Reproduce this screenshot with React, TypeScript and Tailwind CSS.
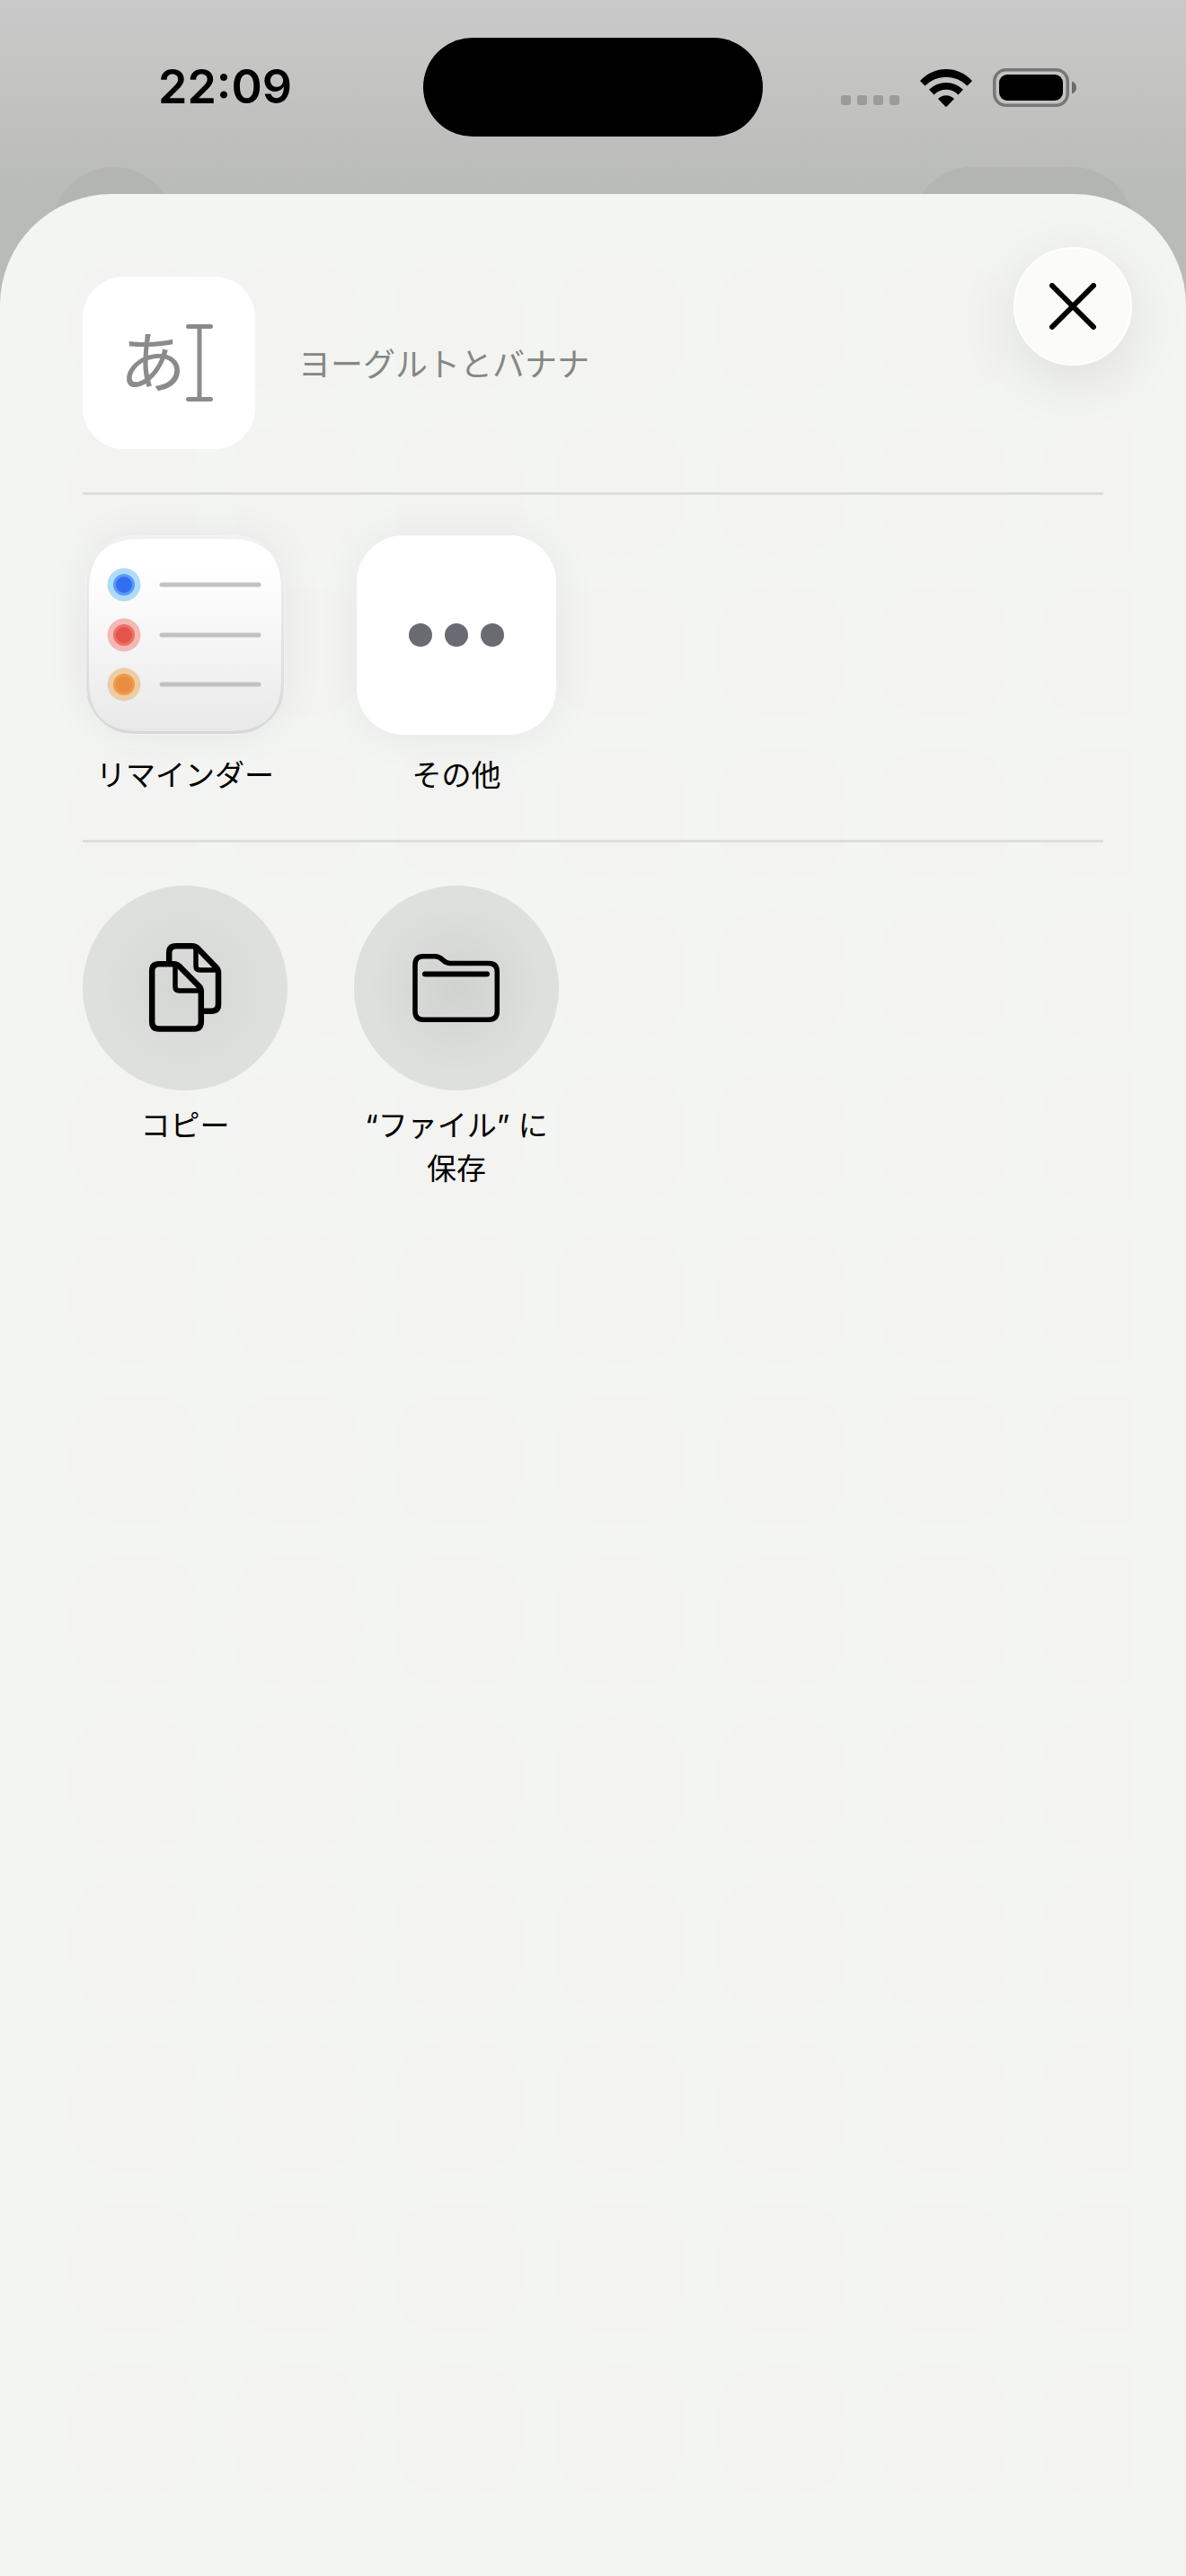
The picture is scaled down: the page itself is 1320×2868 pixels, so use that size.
import * as React from 'react';

function WifiIcon() {
  return (
    <svg className="h-[42px] w-[58px]" viewBox="0 0 58 42" aria-hidden="true">
      <path d="M0 13A39 39 0 0 1 58 13L52.5 18.5A33 33 0 0 0 5.5 18.5Z" />
      <path d="M10 22.8A27 27 0 0 1 48 22.8L42.5 28.4A18.8 18.8 0 0 0 15.5 28.4Z" />
      <path d="M20 33A12.5 12.5 0 0 1 38 33L29.8 41.6Q29 42.4 28.2 41.6Z" />
    </svg>
  );
}

function BatteryIcon() {
  return (
    <svg className="h-[43px] w-[93px]" viewBox="0 0 93 43" aria-hidden="true">
      <rect
        x="1.75"
        y="1.75"
        width="81.5"
        height="39.5"
        rx="13"
        fill="none"
        stroke="#767875"
        strokeWidth="3.5"
      />
      <rect x="7" y="7" width="71" height="29" rx="9" />
      <path d="M88 14.5Q93 16.5 93 21.5T88 28.5Z" fill="#6a6b69" />
    </svg>
  );
}

function StatusBar() {
  return (
    <header className="grid grid-cols-[1fr_auto_1fr] items-center pt-[42px] pb-16">
      <time className="pl-44 font-['Inter'] text-[52px] leading-none font-semibold text-black">
        22:09
      </time>
      <div className="h-[110px] w-[378px] rounded-full bg-black" />
      <div className="flex items-end justify-end pr-[122px]">
        <div className="mr-[23px] flex gap-[7px] pb-0.5">
          {[0, 1, 2, 3].map((i) => (
            <span key={i} className="size-[11px] rounded-[3px] bg-[#9a9c99]" />
          ))}
        </div>
        <WifiIcon />
        <span className="w-[23px]" />
        <BatteryIcon />
      </div>
    </header>
  );
}

// faint rounded squares that show through the sheet
function SheetPattern() {
  return (
    <svg
      className="pointer-events-none absolute inset-0 h-full w-full"
      aria-hidden="true"
    >
      <defs>
        <pattern
          id="cells"
          x="78"
          y="77"
          width="180"
          height="180"
          patternUnits="userSpaceOnUse"
        >
          <path
            d="M0 72C0 16 16 0 72 0S144 16 144 72 128 144 72 144 0 128 0 72Z"
            fill="#f3f3f1"
          />
        </pattern>
      </defs>
      <svg width="95.3%" height="97%">
        <rect x="70" y="70" width="100%" height="100%" fill="url(#cells)" />
      </svg>
    </svg>
  );
}

function RemindersIcon() {
  const rows = [
    { y: 55, halo: '#aedcf7', ring: '#5b98fb', dot: '#2f6ff0' },
    { y: 111, halo: '#f3b9b5', ring: '#ef6f66', dot: '#e5544b' },
    { y: 166, halo: '#edcda6', ring: '#f29a45', dot: '#e98d45' },
  ];

  return (
    <svg
      className="size-[222px] rounded-[56px] shadow-[0_0_50px_rgba(0,0,0,0.06)]"
      viewBox="0 0 222 222"
      aria-hidden="true"
    >
      <defs>
        <linearGradient id="face" x1="0" y1="0" x2="0" y2="1">
          <stop offset="0.15" stopColor="#ffffff" />
          <stop offset="1" stopColor="#e9e9ea" />
        </linearGradient>
        <linearGradient id="rim" x1="0" y1="0" x2="0" y2="1">
          <stop offset="0" stopColor="#f1f1f1" />
          <stop offset="1" stopColor="#d6d7d6" />
        </linearGradient>
      </defs>
      <path
        d="M58 1H164C204 1 221 20 221 60V164C221 204 202 221 164 221H58C20 221 1 204 1 164V60C1 20 18 1 58 1Z"
        fill="url(#rim)"
      />
      <path
        d="M62 4H160C200 4 218 22 218 62V160C218 200 200 218 160 218H62C22 218 4 200 4 160V62C4 22 22 4 62 4Z"
        fill="url(#face)"
      />
      {rows.map((row) => (
        <g key={row.y}>
          <circle cx="43" cy={row.y} r="18.5" fill={row.halo} />
          <circle cx="43" cy={row.y} r="12" fill={row.ring} />
          <circle cx="43" cy={row.y} r="9" fill={row.dot} />
          <path
            d={`M85 ${row.y}H193`}
            stroke="#c2c2c2"
            strokeWidth="5"
            strokeLinecap="round"
          />
        </g>
      ))}
    </svg>
  );
}

function MoreIcon() {
  return (
    <span className="flex size-[222px] items-center justify-center gap-[14px] rounded-[52px] bg-white shadow-[0_0_50px_rgba(0,0,0,0.06)]">
      <span className="size-[26px] rounded-full bg-[#6a6a72]" />
      <span className="size-[26px] rounded-full bg-[#6a6a72]" />
      <span className="size-[26px] rounded-full bg-[#6a6a72]" />
    </span>
  );
}

function CopyIcon() {
  return (
    <svg
      className="size-[228px] rounded-full bg-radial from-[#d4d6d3] to-[#dee0de] to-60%"
      viewBox="0 0 228 228"
      fill="none"
      stroke="#000"
      strokeWidth="6.5"
      strokeLinejoin="round"
      aria-hidden="true"
    >
      <path d="M96.2 86V75Q96.2 67.2 104 67.2H122Q125.5 67.2 128 69.8L148.5 91Q151 93.5 151 97V132Q151 139.8 143 139.8H135" />
      <path d="M126 68V89.5Q126 94 130.5 94H150" strokeWidth="5.5" />
      <path d="M85 87.2H101.5Q105 87.2 107.5 89.8L129.5 112Q131.8 114.5 131.8 118V151.5Q131.8 159.5 123.8 159.5H85Q77.2 159.5 77.2 151.5V95Q77.2 87.2 85 87.2Z" />
      <path d="M103 88V112.5Q103 117 107.5 117H131" strokeWidth="5.5" />
    </svg>
  );
}

function FolderIcon() {
  return (
    <svg
      className="size-[228px] rounded-full bg-radial from-[#d0d2cf] to-[#dee0de] to-60%"
      viewBox="0 0 228 228"
      fill="none"
      stroke="#000"
      strokeWidth="5.5"
      strokeLinecap="round"
      strokeLinejoin="round"
      aria-hidden="true"
    >
      <path d="M68 88Q68 78.8 77 78.8H90C94 78.8 96 80 98.5 82.5C101 85 103 86.5 107 86.5H150Q159.3 86.5 159.3 96V140Q159.3 149.2 150 149.2H77Q68 149.2 68 140Z" />
      <path d="M79 98.5H148" strokeWidth="6" />
    </svg>
  );
}

function ShareItem({
  icon,
  className,
  children,
}: {
  icon: React.ReactNode;
  className: string;
  children: React.ReactNode;
}) {
  return (
    <button
      type="button"
      className={`flex w-[228px] flex-col items-center text-[33px] leading-[48px] text-black ${className}`}
    >
      {icon}
      <span>{children}</span>
    </button>
  );
}

export default function App() {
  return (
    <div
      lang="ja"
      className="relative flex min-h-screen flex-col bg-[#b9bbb8] bg-[linear-gradient(#c9c9c9,#c6c6c5_60px,#b9bbb8_220px)] font-['Inter','Noto_Sans_CJK_JP',sans-serif]"
    >
      {/* toolbar buttons of the app behind the sheet */}
      <div className="absolute top-[186px] left-[58px] size-[136px] rounded-full bg-[#b3b5b2]" />
      <div className="absolute top-[186px] right-[58px] h-[136px] w-[248px] rounded-full bg-[#b3b5b2]" />

      <StatusBar />

      <main className="relative flex-1 overflow-hidden rounded-t-[124px] bg-[#f3f5f2] px-[92px] pt-[92px]">
        <SheetPattern />

        <div className="relative">
          <section className="flex items-center gap-12 border-b-3 border-[#dcdedc] pb-12">
            <div className="flex size-48 items-center justify-center rounded-[46px] bg-white pr-1.5 text-[#8b8b8b]">
              <span className="text-[74px] leading-none">あ</span>
              <svg
                className="h-[86px] w-[30px]"
                viewBox="0 0 30 86"
                fill="none"
                stroke="currentColor"
                strokeWidth="5"
                strokeLinecap="round"
                aria-hidden="true"
              >
                <path d="M2.5 2.5H27.5M15 2.5V83.5M2.5 83.5H27.5" />
              </svg>
            </div>
            <h1 className="pt-1 text-[36px] leading-[48px] text-[#858783]">
              ヨーグルトとバナナ
            </h1>
          </section>

          <section className="flex gap-[74px] border-b-3 border-[#dcdedc] pt-[45px] pb-12">
            <ShareItem icon={<RemindersIcon />} className="gap-[21px]">
              リマインダー
            </ShareItem>
            <ShareItem icon={<MoreIcon />} className="gap-[21px]">
              その他
            </ShareItem>
          </section>

          <section className="flex items-start gap-[74px] py-12">
            <ShareItem icon={<CopyIcon />} className="gap-[15px]">
              コピー
            </ShareItem>
            <ShareItem icon={<FolderIcon />} className="gap-[15px]">
              “ファイル” に
              <br />
              保存
            </ShareItem>
          </section>
        </div>

        <button
          type="button"
          aria-label="閉じる"
          className="absolute top-[59px] right-[60px] flex size-[132px] items-center justify-center rounded-full border-2 border-white bg-[#fbfbf9] shadow-[0_16px_70px_rgba(0,0,0,0.09)]"
        >
          <svg
            className="size-[52px]"
            viewBox="0 0 52 52"
            stroke="#000"
            strokeWidth="6"
            strokeLinecap="round"
            aria-hidden="true"
          >
            <path d="M3 3L49 49M49 3L3 49" />
          </svg>
        </button>
      </main>
    </div>
  );
}
